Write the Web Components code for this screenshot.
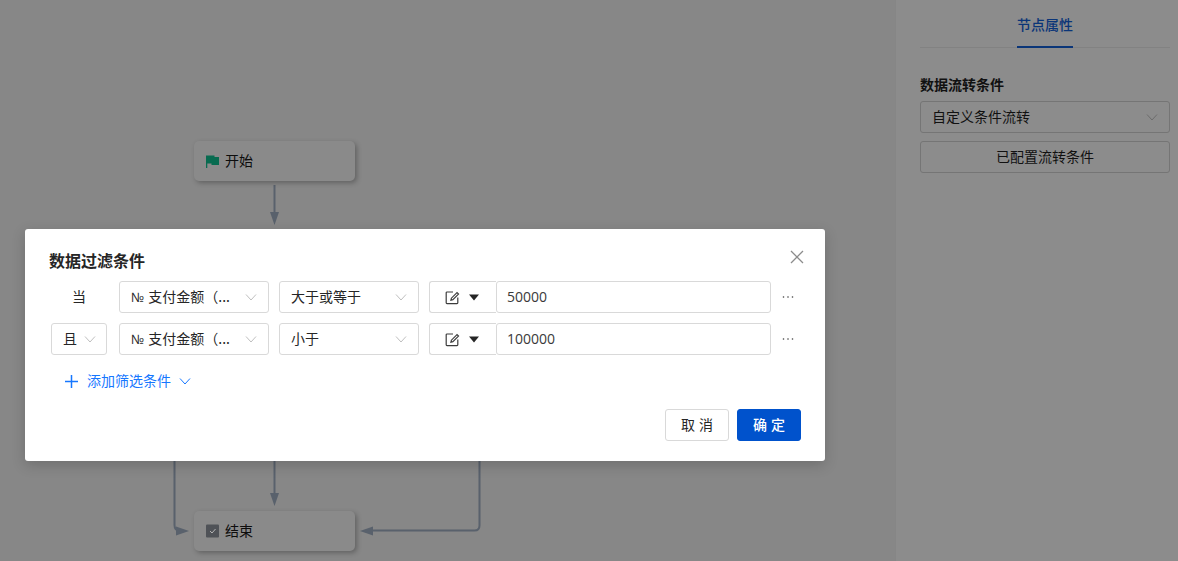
<!DOCTYPE html>
<html lang="zh-CN">
<head>
<meta charset="utf-8">
<title>数据过滤条件</title>
<style>
  html, body { margin: 0; height: 100%; overflow: hidden; }
  body { font-family: "Noto Sans CJK SC", "Open Sans", sans-serif; font-size: 14px; color: #262626; }
  #app { display: flex; width: 1178px; height: 561px; position: relative; }
</style>
</head>
<body>
<div id="app">
  <flow-canvas>
    <flow-node style="left:194px;top:141px" icon="flag">开始</flow-node>
    <flow-node style="left:194px;top:511px" icon="check">结束</flow-node>
  </flow-canvas>
  <side-panel></side-panel>
  <filter-dialog>
    <filter-row lead="当" field="支付金额（..." op="大于或等于" value="50000"></filter-row>
    <filter-row lead="且" field="支付金额（..." op="小于" value="100000"></filter-row>
  </filter-dialog>
</div>
<script>
const FONT = '"Noto Sans CJK SC", "Open Sans", sans-serif';
const chevron = (c) => `<svg width="12" height="12" viewBox="0 0 12 12" fill="none" stroke="${c}" stroke-width="1"><path d="M1 3.5 6 9l5-5.500"/></svg>`;

class FlowNode extends HTMLElement {
    constructor() {
        super();
        this.attachShadow({ mode: 'open' });
    }
    connectedCallback() {
        const flag = `<svg width="13" height="14" viewBox="0 0 13 14"><path d="M0 1.500h8.500v1.500H13v8H5.500V9.500H1.300V14H0z" fill="#086b50"/></svg>`;
        const check = `<svg width="13" height="14" viewBox="0 0 13 14"><rect y=".5" width="13" height="13" rx="1" fill="#4f5257"/><path d="M4 7l2 2L9.500 5" fill="none" stroke="#b4b4b4" stroke-width="1"/></svg>`;
        this.shadowRoot.innerHTML = `
            <style>
                :host {
                    position: absolute;
                    width: 161px;
                    height: 40px;
                    box-sizing: border-box;
                    padding: 0 10px 2px 12px;
                    display: flex;
                    align-items: center;
                    gap: 6px;
                    background: #8a8a8a;
                    border-radius: 5px;
                    box-shadow: 2px 2px 5px rgba(0,0,0,.28);
                    font-size: 14px;
                    color: #0d0d0d;
                }
                svg { display: block; position: relative; top: 1px; }
            </style>
            ${this.getAttribute('icon') === 'flag' ? flag : check}<slot></slot>`;
    }
}

class FlowCanvas extends HTMLElement {
    constructor() {
        super();
        this.attachShadow({ mode: 'open' });
        this.shadowRoot.innerHTML = `
            <style>
                :host { display: block; flex: 1; position: relative; background: #878787; }
                svg { position: absolute; left: 0; top: 0; }
            </style>
            <svg width="895" height="561" fill="none" stroke="#59616c" stroke-width="2">
                <path d="M274.500 185V214"/>
                <path d="M270 212h9l-4.500 13z" fill="#59616c" stroke="none"/>
                <path d="M274.500 455V497"/>
                <path d="M270 493h9l-4.500 13z" fill="#59616c" stroke="none"/>
                <path d="M174.500 455V525q0 5.500 5 5.500h2"/>
                <path d="M176 526.500l13 4.500-13 4.500z" fill="#59616c" stroke="none"/>
                <path d="M479.500 455V525.500q0 5-5 5H370"/>
                <path d="M373 526.500l-13 4.500 13 4.500z" fill="#59616c" stroke="none"/>
            </svg>
            <slot></slot>`;
    }
}

class SidePanel extends HTMLElement {
    constructor() {
        super();
        this.attachShadow({ mode: 'open' });
        this.shadowRoot.innerHTML = `
            <style>
                :host {
                    display: block;
                    width: 283px;
                    box-sizing: border-box;
                    background: #8c8c8c;
                    padding: 0 8px 0 24px;
                    border-left: 1px solid #868686;
                    color: #111;
                    font-size: 14px;
                }
                .tabs {
                    height: 47px;
                    display: flex;
                    justify-content: center;
                    border-bottom: 1px solid #828282;
                    margin-bottom: 27px;
                }
                .tab {
                    width: 56px;
                    height: 48px;
                    box-sizing: border-box;
                    padding-top: 14px;
                    line-height: 20px;
                    text-align: center;
                    color: #0a3578;
                    border-bottom: 2px solid #0a3578;
                    font-weight: 500;
                }
                .title { font-weight: 700; line-height: 18px; margin-bottom: 8px; }
                .box {
                    height: 32px;
                    box-sizing: border-box;
                    border: 1px solid #757575;
                    border-radius: 3px;
                    display: flex;
                    align-items: center;
                    justify-content: space-between;
                    padding: 0 11px 2px 11px;
                }
                .box svg { position: relative; top: 1px; }
                .btn { justify-content: center; margin-top: 8px; }
                svg { display: block; }
            </style>
            <div class="tabs"><div class="tab">节点属性</div></div>
            <div class="title">数据流转条件</div>
            <div class="box"><span>自定义条件流转</span>${chevron('#6c6c6c')}</div>
            <div class="box btn">已配置流转条件</div>`;
    }
}

class UiSelect extends HTMLElement {
    constructor() {
        super();
        this.attachShadow({ mode: 'open' });
    }
    connectedCallback() {
        this.shadowRoot.innerHTML = `
            <style>
                :host {
                    display: flex;
                    align-items: center;
                    justify-content: space-between;
                    box-sizing: border-box;
                    height: 32px;
                    width: ${this.getAttribute('w')}px;
                    padding: 0 ${this.getAttribute('pr') || 11}px 2px 11px;
                    border: 1px solid #d9d9d9;
                    border-radius: 3px;
                    background: #fff;
                    font-size: 14px;
                    color: #262626;
                    white-space: nowrap;
                }
                svg { display: block; flex: none; position: relative; top: 1px; }
            </style>
            <span><slot></slot></span>${chevron('#bfbfbf')}`;
    }
}

class FilterRow extends HTMLElement {
    constructor() {
        super();
        this.attachShadow({ mode: 'open' });
    }
    connectedCallback() {
        const lead = this.getAttribute('lead');
        const head = lead === '当'
            ? `<div class="when">${lead}</div>`
            : `<ui-select w="56" pr="10">${lead}</ui-select>`;
        this.shadowRoot.innerHTML = `
            <style>
                :host { display: flex; align-items: center; height: 32px; font-size: 14px; color: #262626; }
                .when { width: 56px; text-align: center; padding-bottom: 2px; }
                .gap12 { margin-left: 12px; }
                .gap10 { margin-left: 10px; }
                .no { font-size: 13px; margin-right: 4px; font-family: "Open Sans", sans-serif; }
                .kind {
                    box-sizing: border-box;
                    width: 67px;
                    height: 32px;
                    border: 1px solid #d9d9d9;
                    border-radius: 3px 0 0 3px;
                    border-right: 0;
                    display: flex;
                    align-items: center;
                    padding-left: 15px;
                    gap: 9px;
                }
                .val {
                    box-sizing: border-box;
                    width: 275px;
                    height: 32px;
                    border: 1px solid #d9d9d9;
                    border-radius: 3px;
                    display: flex;
                    align-items: center;
                    padding: 0 0 2px 10px;
                    font-family: "Open Sans", sans-serif;
                    color: #3a3a3a;
                }
                .more { margin-left: 10px; }
                svg { display: block; }
            </style>
            ${head}
            <ui-select class="gap12" w="150"><span class="no">№</span>${this.getAttribute('field')}</ui-select>
            <ui-select class="gap10" w="140">${this.getAttribute('op')}</ui-select>
            <div class="kind gap10">
                <svg width="15" height="15" viewBox="0 0 15 15" fill="none" stroke="#3c3c3c" stroke-width="1.200"><path d="M8 2H2a.8.8 0 0 0-.8.8v10a.8.8 0 0 0 .8.8h10a.8.8 0 0 0 .8-.8V7.500"/><path d="M12 2.600 6.400 8.200l-.5 2 2-.5L13.500 4.100z"/></svg>
                <svg width="10" height="7" viewBox="0 0 10 7"><path d="M0 .5h10L5 6.500z" fill="#262626"/></svg>
            </div>
            <div class="val">${this.getAttribute('value')}</div>
            <svg class="more" width="14" height="14" viewBox="0 0 14 14" fill="#404040"><circle cx="2.500" cy="7" r=".8"/><circle cx="7" cy="7" r=".8"/><circle cx="11.500" cy="7" r=".8"/></svg>`;
    }
}

class FilterDialog extends HTMLElement {
    constructor() {
        super();
        this.attachShadow({ mode: 'open' });
        this.shadowRoot.innerHTML = `
            <style>
                :host {
                    position: absolute;
                    left: 25px;
                    top: 229px;
                    width: 800px;
                    height: 232px;
                    box-sizing: border-box;
                    padding: 21px 24px 20px 26px;
                    background: #fff;
                    border-radius: 3px;
                    box-shadow: 0 4px 14px rgba(0,0,0,.18);
                    font-family: ${FONT};
                    display: flex;
                    flex-direction: column;
                }
                h2 {
                    margin: 0 0 11px -2px;
                    font-size: 16px;
                    line-height: 20px;
                    font-weight: 700;
                    color: #262626;
                }
                .close { position: absolute; right: 21px; top: 21px; display: block; }
                .rows { display: flex; flex-direction: column; gap: 10px; }
                .add {
                    display: flex;
                    align-items: center;
                    height: 20px;
                    margin: 16px 0 0 14px;
                    color: #1677ff;
                    font-size: 14px;
                }
                .add svg { display: block; }
                .add span { margin: 0 8px 2px 9px; }
                .foot { margin-top: auto; display: flex; justify-content: flex-end; gap: 8px; }
                .btn {
                    box-sizing: border-box;
                    width: 64px;
                    height: 32px;
                    border-radius: 3px;
                    display: flex;
                    align-items: center;
                    justify-content: center;
                    padding-bottom: 2px;
                    font-size: 14px;
                    letter-spacing: 4px;
                    text-indent: 4px;
                    border: 1px solid #d9d9d9;
                    color: #262626;
                    background: #fff;
                }
                .primary { background: #0052cc; border-color: #0052cc; color: #fff; font-weight: 500; }
            </style>
            <h2>数据过滤条件</h2>
            <svg class="close" width="14" height="14" viewBox="0 0 14 14" stroke="#8c8c8c" stroke-width="1.300"><path d="M1 1l12 12M13 1 1 13"/></svg>
            <div class="rows"><slot></slot></div>
            <div class="add">
                <svg width="13" height="13" viewBox="0 0 13 13" stroke="#1677ff" stroke-width="1.500"><path d="M6.500 0v13M0 6.500h13"/></svg>
                <span>添加筛选条件</span>
                ${chevron('#1677ff')}
            </div>
            <div class="foot">
                <div class="btn">取消</div>
                <div class="btn primary">确定</div>
            </div>`;
    }
}

customElements.define('flow-node', FlowNode);
customElements.define('flow-canvas', FlowCanvas);
customElements.define('side-panel', SidePanel);
customElements.define('ui-select', UiSelect);
customElements.define('filter-row', FilterRow);
customElements.define('filter-dialog', FilterDialog);
</script>
</body>
</html>
